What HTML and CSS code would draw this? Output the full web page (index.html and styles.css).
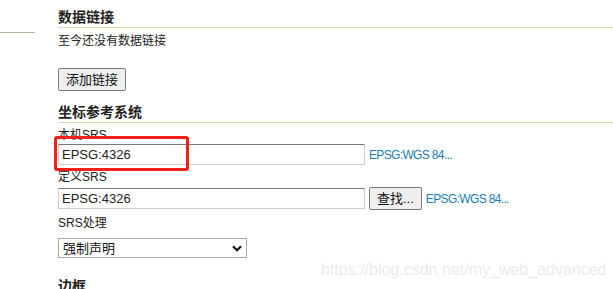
FILE: index.html
```html
<!DOCTYPE html>
<html lang="zh">
<head>
<meta charset="utf-8">
<link rel="stylesheet" href="styles.css">
</head>
<body>
<div class="page">
  <div class="side"><div class="side-rule"></div></div>
  <div class="main">
    <h3 class="section-title first">数据链接</h3>
    <p class="para">至今还没有数据链接</p>
    <button class="btn add-btn">添加链接</button>

    <h3 class="section-title second">坐标参考系统</h3>
    <label class="label first-label">本机SRS</label>
    <div class="row">
      <input class="text-input" type="text" value="EPSG:4326">
      <a class="srs-link">EPSG:WGS 84...</a>
    </div>
    <label class="label">定义SRS</label>
    <div class="row row-search">
      <input class="text-input" type="text" value="EPSG:4326">
      <button class="btn find-btn">查找...</button>
      <a class="srs-link">EPSG:WGS 84...</a>
    </div>
    <label class="label label-handling">SRS处理</label>
    <div class="select-wrap">
      <select class="select">
        <option>强制声明</option>
      </select>
      <svg class="chevron" width="10" height="7" viewBox="0 0 10 7"><path d="M1 1.2 L5 5.2 L9 1.2" fill="none" stroke="#111" stroke-width="2.2"/></svg>
    </div>
    <h3 class="section-title third">边框</h3>
  </div>
  <div class="highlight"></div>
  <div class="watermark">https://blog.csdn.net/my_web_advanced</div>
</div>
</body>
</html>
```

FILE: styles.css
```css
html, body {
  margin: 0;
  padding: 0;
  background: #fff;
}
body {
  font-family: "Liberation Sans", "Noto Sans CJK SC", sans-serif;
  font-size: 12px;
  color: #222;
}
.page {
  position: relative;
  display: flex;
  height: 289px;
  overflow: hidden;
}
.side {
  width: 35px;
  flex: none;
  padding-top: 32px;
}
.side-rule {
  height: 1px;
  background: #aeb59e;
}
.main {
  flex: 1;
  margin-left: 23px;
  display: flex;
  flex-direction: column;
  align-items: flex-start;
}
.section-title {
  align-self: stretch;
  margin: 0;
  font-size: 14px;
  font-weight: bold;
  line-height: 17px;
  padding-bottom: 1px;
  color: #222;
  border-bottom: 1px solid #cde0b4;
}
.section-title.first { margin-top: 9px; }
.section-title.second { margin-top: 13px; }
.section-title.third { margin-top: 20px; border-bottom: none; }
.para {
  margin: 5px 0 0;
  line-height: 16px;
}
.btn {
  font-family: "Liberation Sans", "Noto Sans CJK SC", sans-serif;
  font-size: 13px;
  line-height: 17px;
  padding: 2px 7px;
  border: 1px solid #7a7a7a;
  border-radius: 2px;
  background: #efefef;
  color: #111;
}
.add-btn { margin-top: 19px; }
.label {
  display: block;
  line-height: 16px;
  margin-top: 4px;
  color: #222;
}
.first-label { margin-top: 4px; }
.label-handling { margin-top: 5px; }
.row {
  display: flex;
  align-items: center;
  margin-top: 1px;
}
.row-search { margin-top: 2px; }
.text-input {
  box-sizing: border-box;
  width: 307px;
  height: 21px;
  padding: 0 3px;
  border: 1px solid #cdcdcd;
  border-top-color: #7a7a7a;
  font-family: "Liberation Sans", sans-serif;
  font-size: 13px;
  color: #222;
  outline: none;
}
.find-btn { margin-left: 4px; }
.srs-link {
  margin-left: 4px;
  font-family: "Liberation Sans", sans-serif;
  font-size: 12px;
  letter-spacing: -0.65px;
  color: #1b7db0;
  text-decoration: none;
}
.select-wrap {
  position: relative;
  margin-top: 7px;
}
.select {
  appearance: none;
  -webkit-appearance: none;
  box-sizing: border-box;
  width: 189px;
  height: 20px;
  padding: 0 4px;
  border: 1px solid #a8a8a8;
  border-radius: 0;
  background: #fff;
  font-family: "Liberation Sans", "Noto Sans CJK SC", sans-serif;
  font-size: 13px;
  color: #111;
}
.chevron {
  position: absolute;
  right: 5px;
  top: 7px;
}
.highlight {
  position: absolute;
  left: 54px;
  top: 136px;
  width: 135px;
  height: 35px;
  box-sizing: border-box;
  border: 3px solid #f0201c;
  border-radius: 3px;
}
.watermark {
  position: absolute;
  left: 321px;
  top: 261px;
  font-size: 16px;
  color: #ebebeb;
  white-space: nowrap;
}
```
